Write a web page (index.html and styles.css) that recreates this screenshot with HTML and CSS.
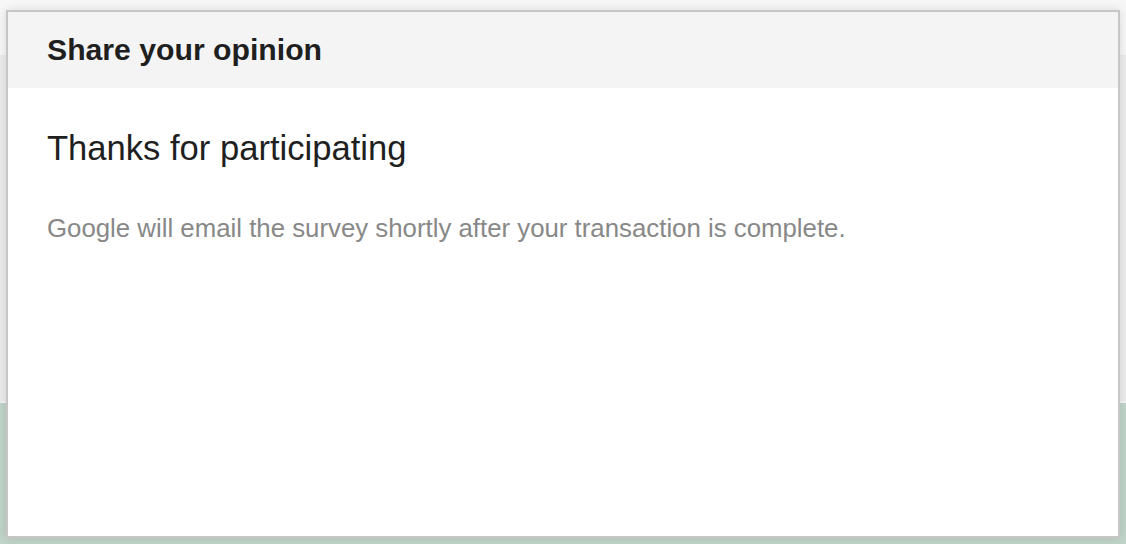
FILE: index.html
```html
<!DOCTYPE html>
<html lang="en">
<head>
<meta charset="utf-8">
<title>Share your opinion</title>
<link rel="stylesheet" href="styles.css">
</head>
<body>
<div class="backdrop">
  <div class="bg-top"></div>
  <div class="bg-mid"></div>
  <div class="bg-line"></div>
  <div class="bg-green"></div>
</div>
<div class="dialog" role="dialog" aria-labelledby="dlg-title">
  <div class="dialog-header">
    <h1 id="dlg-title" class="dialog-title">Share your opinion</h1>
  </div>
  <div class="dialog-body">
    <h2 class="thanks">Thanks for participating</h2>
    <p class="note">Google will email the survey shortly after your transaction is complete.</p>
  </div>
</div>
</body>
</html>
```
FILE: styles.css
```css
html, body {
  margin: 0;
  padding: 0;
  width: 1126px;
  height: 544px;
  overflow: hidden;
  font-family: "Liberation Sans", Arial, Helvetica, sans-serif;
}

.backdrop {
  display: flex;
  flex-direction: column;
  width: 1126px;
  height: 544px;
}

.bg-top {
  height: 55px;
  background: #f7f7f7;
}

.bg-mid {
  height: 346px;
  background: #ececec;
}

.bg-line {
  height: 2px;
  background: #f4f4f4;
}

.bg-green {
  flex: 1;
  background: #c1d4c9;
}

.dialog {
  position: absolute;
  left: 6px;
  top: 10px;
  width: 1110px;
  height: 524px;
  border: 2px solid #c6c6c6;
  background: #ffffff;
  box-shadow: 0 0 10px rgba(0, 0, 0, 0.12);
  display: flex;
  flex-direction: column;
}

.dialog-header {
  background: #f4f4f4;
  padding: 23px 39px;
}

.dialog-title {
  margin: 0;
  font-size: 30.2px;
  line-height: 30px;
  font-weight: bold;
  color: #1f1f1f;
}

.dialog-body {
  padding: 43px 39px 0;
}

.thanks {
  margin: 0;
  font-size: 34.6px;
  line-height: 34.6px;
  font-weight: normal;
  color: #1f1f1f;
}

.note {
  margin: 49px 0 0;
  font-size: 25.8px;
  line-height: 26px;
  color: #888888;
}
```
